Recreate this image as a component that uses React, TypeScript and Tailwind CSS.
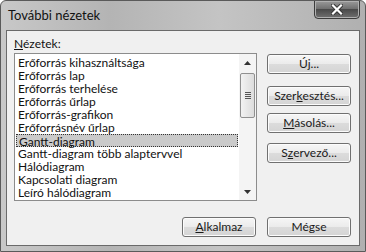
import React from "react"

const items = [
  "Erőforrás kihasználtsága",
  "Erőforrás lap",
  "Erőforrás terhelése",
  "Erőforrás űrlap",
  "Erőforrás-grafikon",
  "Erőforrásnév űrlap",
  "Gantt-diagram",
  "Gantt-diagram több alaptervvel",
  "Hálódiagram",
  "Kapcsolati diagram",
  "Leíró hálódiagram",
]

function Btn({ children, w = "w-[84px]", className = "" }: { children: React.ReactNode; w?: string; className?: string }) {
  return (
    <div
      className={`flex h-[20px] ${w} shrink-0 items-center justify-center rounded-[3px] border border-[#707070] bg-[linear-gradient(#f6f6f6_0%,#ebebeb_50%,#dcdcdc_50%,#d4d4d4_100%)] text-[12px] leading-none text-[#1a1a1a] shadow-[inset_0_0_0_1px_#fcfcfc] ${className}`}
    >
      {children}
    </div>
  )
}

export default function App() {
  return (
    <div
      className="flex h-[252px] w-[366px] flex-col overflow-hidden rounded-t-[6px] border border-[#5a5a5a] bg-[linear-gradient(90deg,#c8c8c8,#b4b4b4_30%,#c4c4c4_60%,#b0b0b0)] text-[12px]"
      style={{ fontFamily: "Lato, 'Noto Sans', sans-serif" }}
    >
      <div className="relative h-[29px] shrink-0">
        <div className="pl-[7px] pt-[5px] text-[13px] text-[#111]">További nézetek</div>
        <div className="absolute right-[5px] top-[-1px] flex h-[19px] w-[46px] items-center justify-center rounded-b-[4px] border border-[#3c3c3c] bg-[linear-gradient(#9a9a9a,#6c6c6c_50%,#4a4a4a_50%,#707070)] shadow-[inset_0_0_0_1px_#b0b0b0]">
          <svg width="12" height="11" viewBox="0 0 12 11">
            <path d="M2 1.5 L10 9.5 M10 1.5 L2 9.5" stroke="#333" strokeWidth="4" strokeLinecap="square" />
            <path d="M2 1.5 L10 9.5 M10 1.5 L2 9.5" stroke="#fff" strokeWidth="2.2" strokeLinecap="square" />
          </svg>
        </div>
      </div>
      <div className="mx-[5px] mb-[5px] flex flex-1 flex-col border border-[#6a6a6a] bg-[#f0f0f0] pl-[7px] pt-[5px]">
        <div className="flex">
          <div className="flex flex-col">
            <div className="h-[16px] leading-[16px] text-[#111]">
              <span className="underline">N</span>ézetek:
            </div>
            <div className="relative mt-[1px] flex h-[148px] w-[243px] border border-[#8c8c8c] bg-white">
              <div className="flex-1 pt-[2px] pl-[1px]">
                {items.map((t) => (
                  <div
                    key={t}
                    className={`h-[13px] whitespace-nowrap pl-[2px] leading-[13px] text-[#111] ${
                      t === "Gantt-diagram"
                        ? "mr-[1px] border border-dotted border-[#333] bg-[#cacaca] pl-[1px] leading-[11px]"
                        : ""
                    }`}
                  >
                    {t}
                  </div>
                ))}
              </div>
              <div className="flex w-[17px] flex-col items-center bg-[#f4f4f4]">
                <div className="flex h-[17px] w-full items-center justify-center">
                  <svg width="7" height="4" viewBox="0 0 7 4">
                    <path d="M0 4 L3.5 0 L7 4 Z" fill="#333" />
                  </svg>
                </div>
                <div className="mt-[2px] flex h-[45px] w-[15px] items-center justify-center rounded-[2px] border border-[#909090] bg-[linear-gradient(90deg,#f2f2f2,#dcdcdc)]">
                  <div className="flex flex-col gap-[1px]">
                    <div className="h-[1px] w-[6px] bg-[#555]" />
                    <div className="h-[1px] w-[6px] bg-[#555]" />
                    <div className="h-[1px] w-[6px] bg-[#555]" />
                    <div className="h-[1px] w-[6px] bg-[#555]" />
                  </div>
                </div>
                <div className="flex-1" />
                <div className="flex h-[17px] w-full items-center justify-center">
                  <svg width="7" height="4" viewBox="0 0 7 4">
                    <path d="M0 0 L3.5 4 L7 0 Z" fill="#333" />
                  </svg>
                </div>
              </div>
            </div>
          </div>
          <div className="ml-[10px] flex flex-col pt-[18px]">
            <Btn>
              Ú<span className="underline">j</span>...
            </Btn>
            <Btn className="mt-[12px]">
              Szer<span className="underline">k</span>esztés...
            </Btn>
            <Btn className="mt-[7px]">
              <span className="underline">M</span>ásolás...
            </Btn>
            <Btn className="mt-[10px]">
              S<span className="underline">z</span>ervező...
            </Btn>
          </div>
        </div>
        <div className="mt-[16px] flex justify-end gap-[11px] pr-[8px]">
          <Btn w="w-[74px]">
            <span className="underline">A</span>lkalmaz
          </Btn>
          <Btn>Mégse</Btn>
        </div>
      </div>
    </div>
  )
}
